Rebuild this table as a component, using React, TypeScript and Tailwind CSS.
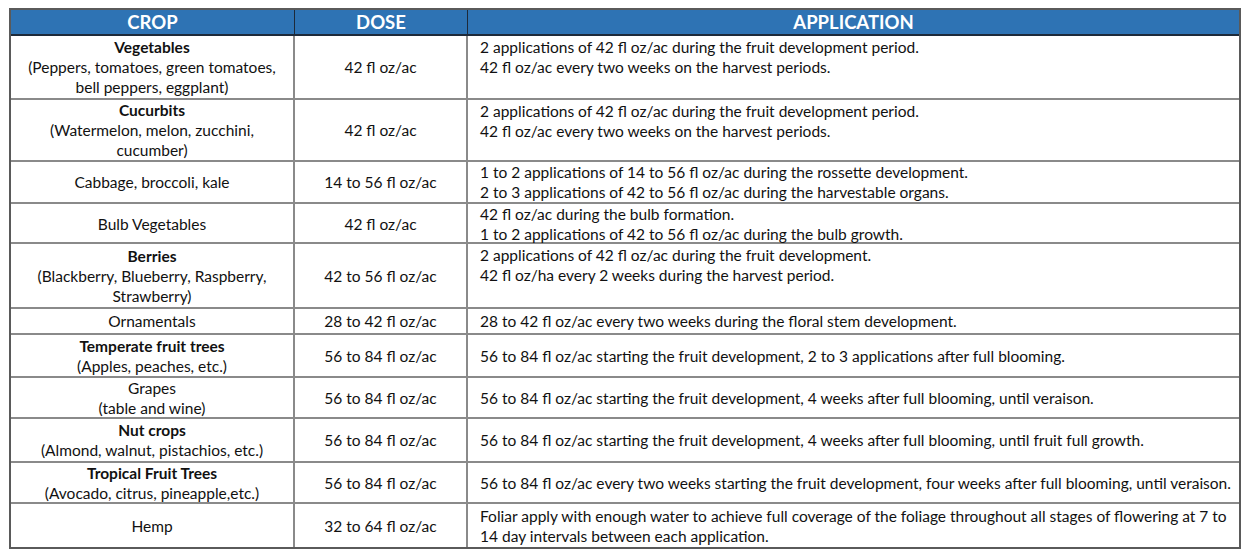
import React from 'react';

interface Row {
  title: string;
  sub?: string[];
  bold?: boolean;
  dose: string;
  app: string[];
  h: string;
  top?: boolean;
}

const rows: Row[] = [
  {
    title: 'Vegetables',
    sub: ['(Peppers, tomatoes, green tomatoes,', 'bell peppers, eggplant)'],
    bold: true,
    dose: '42 fl oz/ac',
    app: [
      '2 applications of 42 fl oz/ac during the fruit development period.',
      '42 fl oz/ac every two weeks on the harvest periods.',
    ],
    h: 'h-[64px]',
    top: true,
  },
  {
    title: 'Cucurbits',
    sub: ['(Watermelon, melon, zucchini,', 'cucumber)'],
    bold: true,
    dose: '42 fl oz/ac',
    app: [
      '2 applications of 42 fl oz/ac during the fruit development period.',
      '42 fl oz/ac every two weeks on the harvest periods.',
    ],
    h: 'h-[62px]',
    top: true,
  },
  {
    title: 'Cabbage, broccoli, kale',
    dose: '14 to 56 fl oz/ac',
    app: [
      '1 to 2 applications of 14 to 56 fl oz/ac during the rossette development.',
      '2 to 3 applications of 42 to 56 fl oz/ac during the harvestable organs.',
    ],
    h: 'h-[42px]',
  },
  {
    title: 'Bulb Vegetables',
    dose: '42 fl oz/ac',
    app: ['42 fl oz/ac during the bulb formation.', '1 to 2 applications of 42 to 56 fl oz/ac during the bulb growth.'],
    h: 'h-[40px]',
  },
  {
    title: 'Berries',
    sub: ['(Blackberry, Blueberry, Raspberry,', 'Strawberry)'],
    bold: true,
    dose: '42 to 56 fl oz/ac',
    app: ['2 applications of 42 fl oz/ac during the fruit development.', '42 fl oz/ha every 2 weeks during the harvest period.'],
    h: 'h-[65px]',
    top: true,
  },
  {
    title: 'Ornamentals',
    dose: '28 to 42 fl oz/ac',
    app: ['28 to 42 fl oz/ac every two weeks during the floral stem development.'],
    h: 'h-[26px]',
  },
  {
    title: 'Temperate fruit trees',
    sub: ['(Apples, peaches, etc.)'],
    bold: true,
    dose: '56 to 84 fl oz/ac',
    app: ['56 to 84 fl oz/ac starting the fruit development, 2 to 3 applications after full blooming.'],
    h: 'h-[43px]',
  },
  {
    title: 'Grapes',
    sub: ['(table and wine)'],
    dose: '56 to 84 fl oz/ac',
    app: ['56 to 84 fl oz/ac starting the fruit development, 4 weeks after full blooming, until veraison.'],
    h: 'h-[41px]',
  },
  {
    title: 'Nut crops',
    sub: ['(Almond, walnut, pistachios, etc.)'],
    bold: true,
    dose: '56 to 84 fl oz/ac',
    app: ['56 to 84 fl oz/ac starting the fruit development, 4 weeks after full blooming, until fruit full growth.'],
    h: 'h-[44px]',
  },
  {
    title: 'Tropical Fruit Trees',
    sub: ['(Avocado, citrus, pineapple,etc.)'],
    bold: true,
    dose: '56 to 84 fl oz/ac',
    app: [
      '56 to 84 fl oz/ac every two weeks starting the fruit development, four weeks after full blooming, until veraison.',
    ],
    h: 'h-[41px]',
  },
  {
    title: 'Hemp',
    dose: '32 to 64 fl oz/ac',
    app: [
      'Foliar apply with enough water to achieve full coverage of the foliage throughout all stages of flowering at 7 to',
      '14 day intervals between each application.',
    ],
    h: 'h-[43px]',
  },
];

export default function App() {
  return (
    <div className="min-h-[555px] w-[1248px] bg-white pl-[9px] pt-[8px] font-['Lato',sans-serif] text-[15.5px] leading-[20px] text-[#111]">
      <div className="w-[1232px] border-2 border-[#5a5a5a]">
        {/* Header */}
        <div className="grid h-[26px] grid-cols-[284px_173px_1fr] border-b-2 border-[#1d2a3a] bg-[#2e73b4] text-[18.5px] font-bold text-white">
          <div className="flex items-center justify-center border-r border-[#1d2a3a]">CROP</div>
          <div className="flex items-center justify-center border-r border-[#1d2a3a]">DOSE</div>
          <div className="flex items-center justify-center">APPLICATION</div>
        </div>

        {rows.map((row, i) => (
          <div
            key={row.title}
            className={`grid grid-cols-[284px_173px_1fr] ${row.h} ${
              i < rows.length - 1 ? 'border-b-2 border-[#8a8a8a]' : ''
            }`}
          >
            <div className="flex flex-col items-center justify-center border-r-2 border-[#8a8a8a] text-center">
              <div className={row.bold ? 'font-bold' : ''}>{row.title}</div>
              {row.sub?.map(s => (
                <div key={s}>{s}</div>
              ))}
            </div>
            <div className="flex items-center justify-center border-r-2 border-[#8a8a8a]">{row.dose}</div>
            <div className={`flex flex-col pl-[12px] ${row.top ? 'justify-start pt-[1px]' : 'justify-center'}`}>
              {row.app.map(a => (
                <div key={a} className="whitespace-nowrap">
                  {a}
                </div>
              ))}
            </div>
          </div>
        ))}
      </div>
    </div>
  );
}
